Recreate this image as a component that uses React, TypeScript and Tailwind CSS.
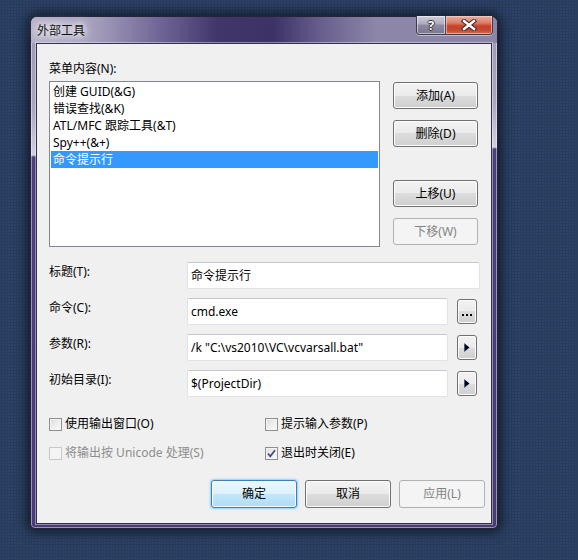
import type { ReactNode } from 'react';

const btnBase =
  'flex items-center justify-center rounded-[3px] border text-[12px] leading-[16px]';
const btnNormal =
  'border-[#707070] bg-[linear-gradient(180deg,#f2f2f2_0%,#ebebeb_50%,#dddddd_50%,#cfcfcf_100%)] text-black shadow-[inset_0_0_0_1px_#fcfcfc]';
const btnDisabled = 'border-[#adb2b5] bg-[#f4f4f4] text-[#838383]';
const btnDefault =
  'border-[#3c7fb1] bg-[linear-gradient(180deg,#ecf7fd_0%,#dcf1fc_50%,#c3e7fb_50%,#aedcf5_100%)] text-black shadow-[inset_0_0_0_1px_#f4fbfe,0_0_2px_1px_#8fd2f7]';

function Button({
  children,
  disabled,
  primary,
  className,
}: {
  children: ReactNode;
  disabled?: boolean;
  primary?: boolean;
  className?: string;
}) {
  const look = disabled ? btnDisabled : primary ? btnDefault : btnNormal;
  return (
    <button type="button" className={`${btnBase} ${look} ${className ?? ''}`}>
      {children}
    </button>
  );
}

function TextBox({ value, className }: { value: string; className: string }) {
  return (
    <div
      className={`flex h-[27px] items-center rounded-[2px] border border-[#dfe3e8] border-t-[#c4c8ce] bg-white pl-[3px] ${className}`}
    >
      {value}
    </div>
  );
}

function SmallButton({ arrow }: { arrow?: boolean }) {
  return (
    <button
      type="button"
      className={`ml-[9px] mt-[1px] flex h-[25px] w-[20px] items-center justify-center ${btnBase} ${btnNormal}`}
    >
      {arrow ? (
        <svg width="6" height="9" viewBox="0 0 6 9">
          <path d="M0.5 0.5 L5.5 4.5 L0.5 8.5 Z" fill="#000" />
          <path d="M0.5 0.5 L0.5 8.5" stroke="#2d5fb0" strokeWidth="1" />
        </svg>
      ) : (
        <svg width="10" height="3" viewBox="0 0 10 3" className="mt-[5px]">
          <rect x="0" y="1" width="2" height="2" fill="#000" />
          <rect x="4" y="1" width="2" height="2" fill="#000" />
          <rect x="8" y="1" width="2" height="2" fill="#000" />
        </svg>
      )}
    </button>
  );
}

function Field({
  label,
  value,
  extra,
  wide,
}: {
  label: string;
  value: string;
  extra?: 'dots' | 'arrow';
  wide?: boolean;
}) {
  return (
    <div className="flex items-start">
      <span className="w-[138px] pt-[2px]">{label}</span>
      <TextBox value={value} className={wide ? 'w-[293px]' : 'w-[261px]'} />
      {extra && <SmallButton arrow={extra === 'arrow'} />}
    </div>
  );
}

function Checkbox({
  label,
  checked,
  disabled,
}: {
  label: string;
  checked?: boolean;
  disabled?: boolean;
}) {
  return (
    <div className="flex items-center">
      <span
        className={`flex h-[13px] w-[13px] items-center justify-center border ${
          disabled
            ? 'border-[#c8c8c8] bg-[#f4f4f4]'
            : 'border-[#8e8f8f] bg-[linear-gradient(135deg,#dcdcdc_0%,#f0f0f0_60%,#fbfbfb_100%)] shadow-[inset_0_0_0_1px_#f4f4f4]'
        }`}
      >
        {checked && (
          <svg width="11" height="11" viewBox="0 0 11 11">
            <path
              d="M2 5.5 L4.3 8.3 L9 2.2"
              fill="none"
              stroke="#3e4f86"
              strokeWidth="1.8"
            />
          </svg>
        )}
      </span>
      <span className={`ml-[3px] ${disabled ? 'text-[#8d8d8d]' : 'text-black'}`}>{label}</span>
    </div>
  );
}

const items = ['创建 GUID(&G)', '错误查找(&K)', 'ATL/MFC 跟踪工具(&T)', 'Spy++(&+)', '命令提示行'];

export default function App() {
  return (
    <div className="min-h-[560px] w-full bg-[#2c4266] bg-[radial-gradient(rgba(22,34,58,0.22)_1px,transparent_1.2px)] bg-[length:3px_3px] pl-[30px] pt-[16px] font-['Noto_Sans','Noto_Sans_CJK_SC',sans-serif] text-[12px] leading-[16px] text-black">
      <div className="flex h-[513px] w-[468px] flex-col rounded-t-[7px] rounded-b-[5px] border border-[#23233a] bg-[linear-gradient(179deg,#9d97b8_0%,#aaa5c1_18%,#d3d1df_26.6%,#4c3f7c_27%,#483b76_100%)] shadow-[0_0_12px_3px_rgba(0,0,0,0.6),inset_0_0_0_1px_rgba(255,255,255,0.45)]">
        {/* title bar */}
        <div className="flex h-[26px] items-start justify-between rounded-t-[6px] bg-[linear-gradient(90deg,#b7b2ca_0%,#a39dbb_14%,#6e6494_28%,#40366a_40%,#3c3266_52%,#675e8d_62%,#8c86a8_74%,#8b85a7_100%)]">
          <span className="pl-[6px] pt-[6px] text-[12px] leading-[16px] text-[#111] [text-shadow:0_0_6px_#fff,0_0_10px_#fff,0_0_14px_#fff]">
            外部工具
          </span>
          <div className="mr-[4px] mt-[-1px] flex h-[19px] overflow-hidden rounded-b-[4px] border border-t-0 border-[#3b3a4e] shadow-[0_1px_0_rgba(255,255,255,0.45)]">
            <div className="flex w-[29px] items-center justify-center border-r border-[#4a4860] bg-[linear-gradient(180deg,#d0cedb_0%,#aeabbf_45%,#8e8aa2_50%,#7a7690_100%)] shadow-[inset_0_0_0_1px_rgba(255,255,255,0.5)]">
              <span className="text-[13px] font-bold leading-[13px] text-white [text-shadow:-1px_0_#333,1px_0_#333,0_-1px_#333,0_1px_#333]">
                ?
              </span>
            </div>
            <div className="flex w-[46px] items-center justify-center bg-[linear-gradient(180deg,#eab0a2_0%,#d97a66_40%,#c8412b_55%,#c44a33_80%,#d66d55_100%)] shadow-[inset_0_0_0_1px_rgba(255,220,210,0.55)]">
              <svg width="16" height="12" viewBox="0 0 16 12">
                <path d="M3 2 L13 10 M13 2 L3 10" stroke="#3a2a2a" strokeWidth="4.4" strokeLinecap="square" />
                <path d="M3 2 L13 10 M13 2 L3 10" stroke="#fff" strokeWidth="2.4" strokeLinecap="square" />
              </svg>
            </div>
          </div>
        </div>

        {/* client area */}
        <div className="mx-[5px] mb-[4px] flex flex-1 flex-col border border-[#34304a] bg-[#f0f0f0] pl-[12px] pt-[17px] shadow-[0_0_0_1px_rgba(255,255,255,0.4)]">
          <div className="flex">
            <div className="flex flex-col">
              <span className="h-[16px]">菜单内容(N):</span>
              <div className="mt-[4px] flex h-[166px] w-[331px] flex-col border border-[#828790] bg-white p-[1px]">
                {items.map((it, i) => (
                  <div
                    key={it}
                    className={`h-[17px] whitespace-pre px-[2px] leading-[17px] ${
                      i === 4 ? 'bg-[#3399ff] text-white' : ''
                    }`}
                  >
                    {it}
                  </div>
                ))}
              </div>
            </div>
            <div className="ml-[13px] mt-[21px] flex w-[85px] flex-col">
              <Button className="h-[27px]">添加(A)</Button>
              <Button className="mt-[11px] h-[27px]">删除(D)</Button>
              <Button className="mt-[33px] h-[27px]">上移(U)</Button>
              <Button disabled className="mt-[11px] h-[27px]">
                下移(W)
              </Button>
            </div>
          </div>

          <div className="mt-[15px] flex flex-col gap-[9px]">
            <Field label="标题(T):" value="命令提示行" wide />
            <Field label="命令(C):" value="cmd.exe" extra="dots" />
            <Field label="参数(R):" value={'/k "C:\\vs2010\\VC\\vcvarsall.bat"'} extra="arrow" />
            <Field label="初始目录(I):" value="$(ProjectDir)" extra="arrow" />
          </div>

          <div className="mt-[19px] grid grid-cols-[216px_1fr] gap-y-[13px]">
            <Checkbox label="使用输出窗口(O)" />
            <Checkbox label="提示输入参数(P)" />
            <Checkbox label="将输出按 Unicode 处理(S)" disabled />
            <Checkbox label="退出时关闭(E)" checked />
          </div>

          <div className="ml-[162px] mt-[19px] flex gap-[8px]">
            <Button primary className="h-[28px] w-[86px]">
              确定
            </Button>
            <Button className="h-[28px] w-[86px]">取消</Button>
            <Button disabled className="h-[28px] w-[86px]">
              应用(L)
            </Button>
          </div>
        </div>
      </div>
    </div>
  );
}
